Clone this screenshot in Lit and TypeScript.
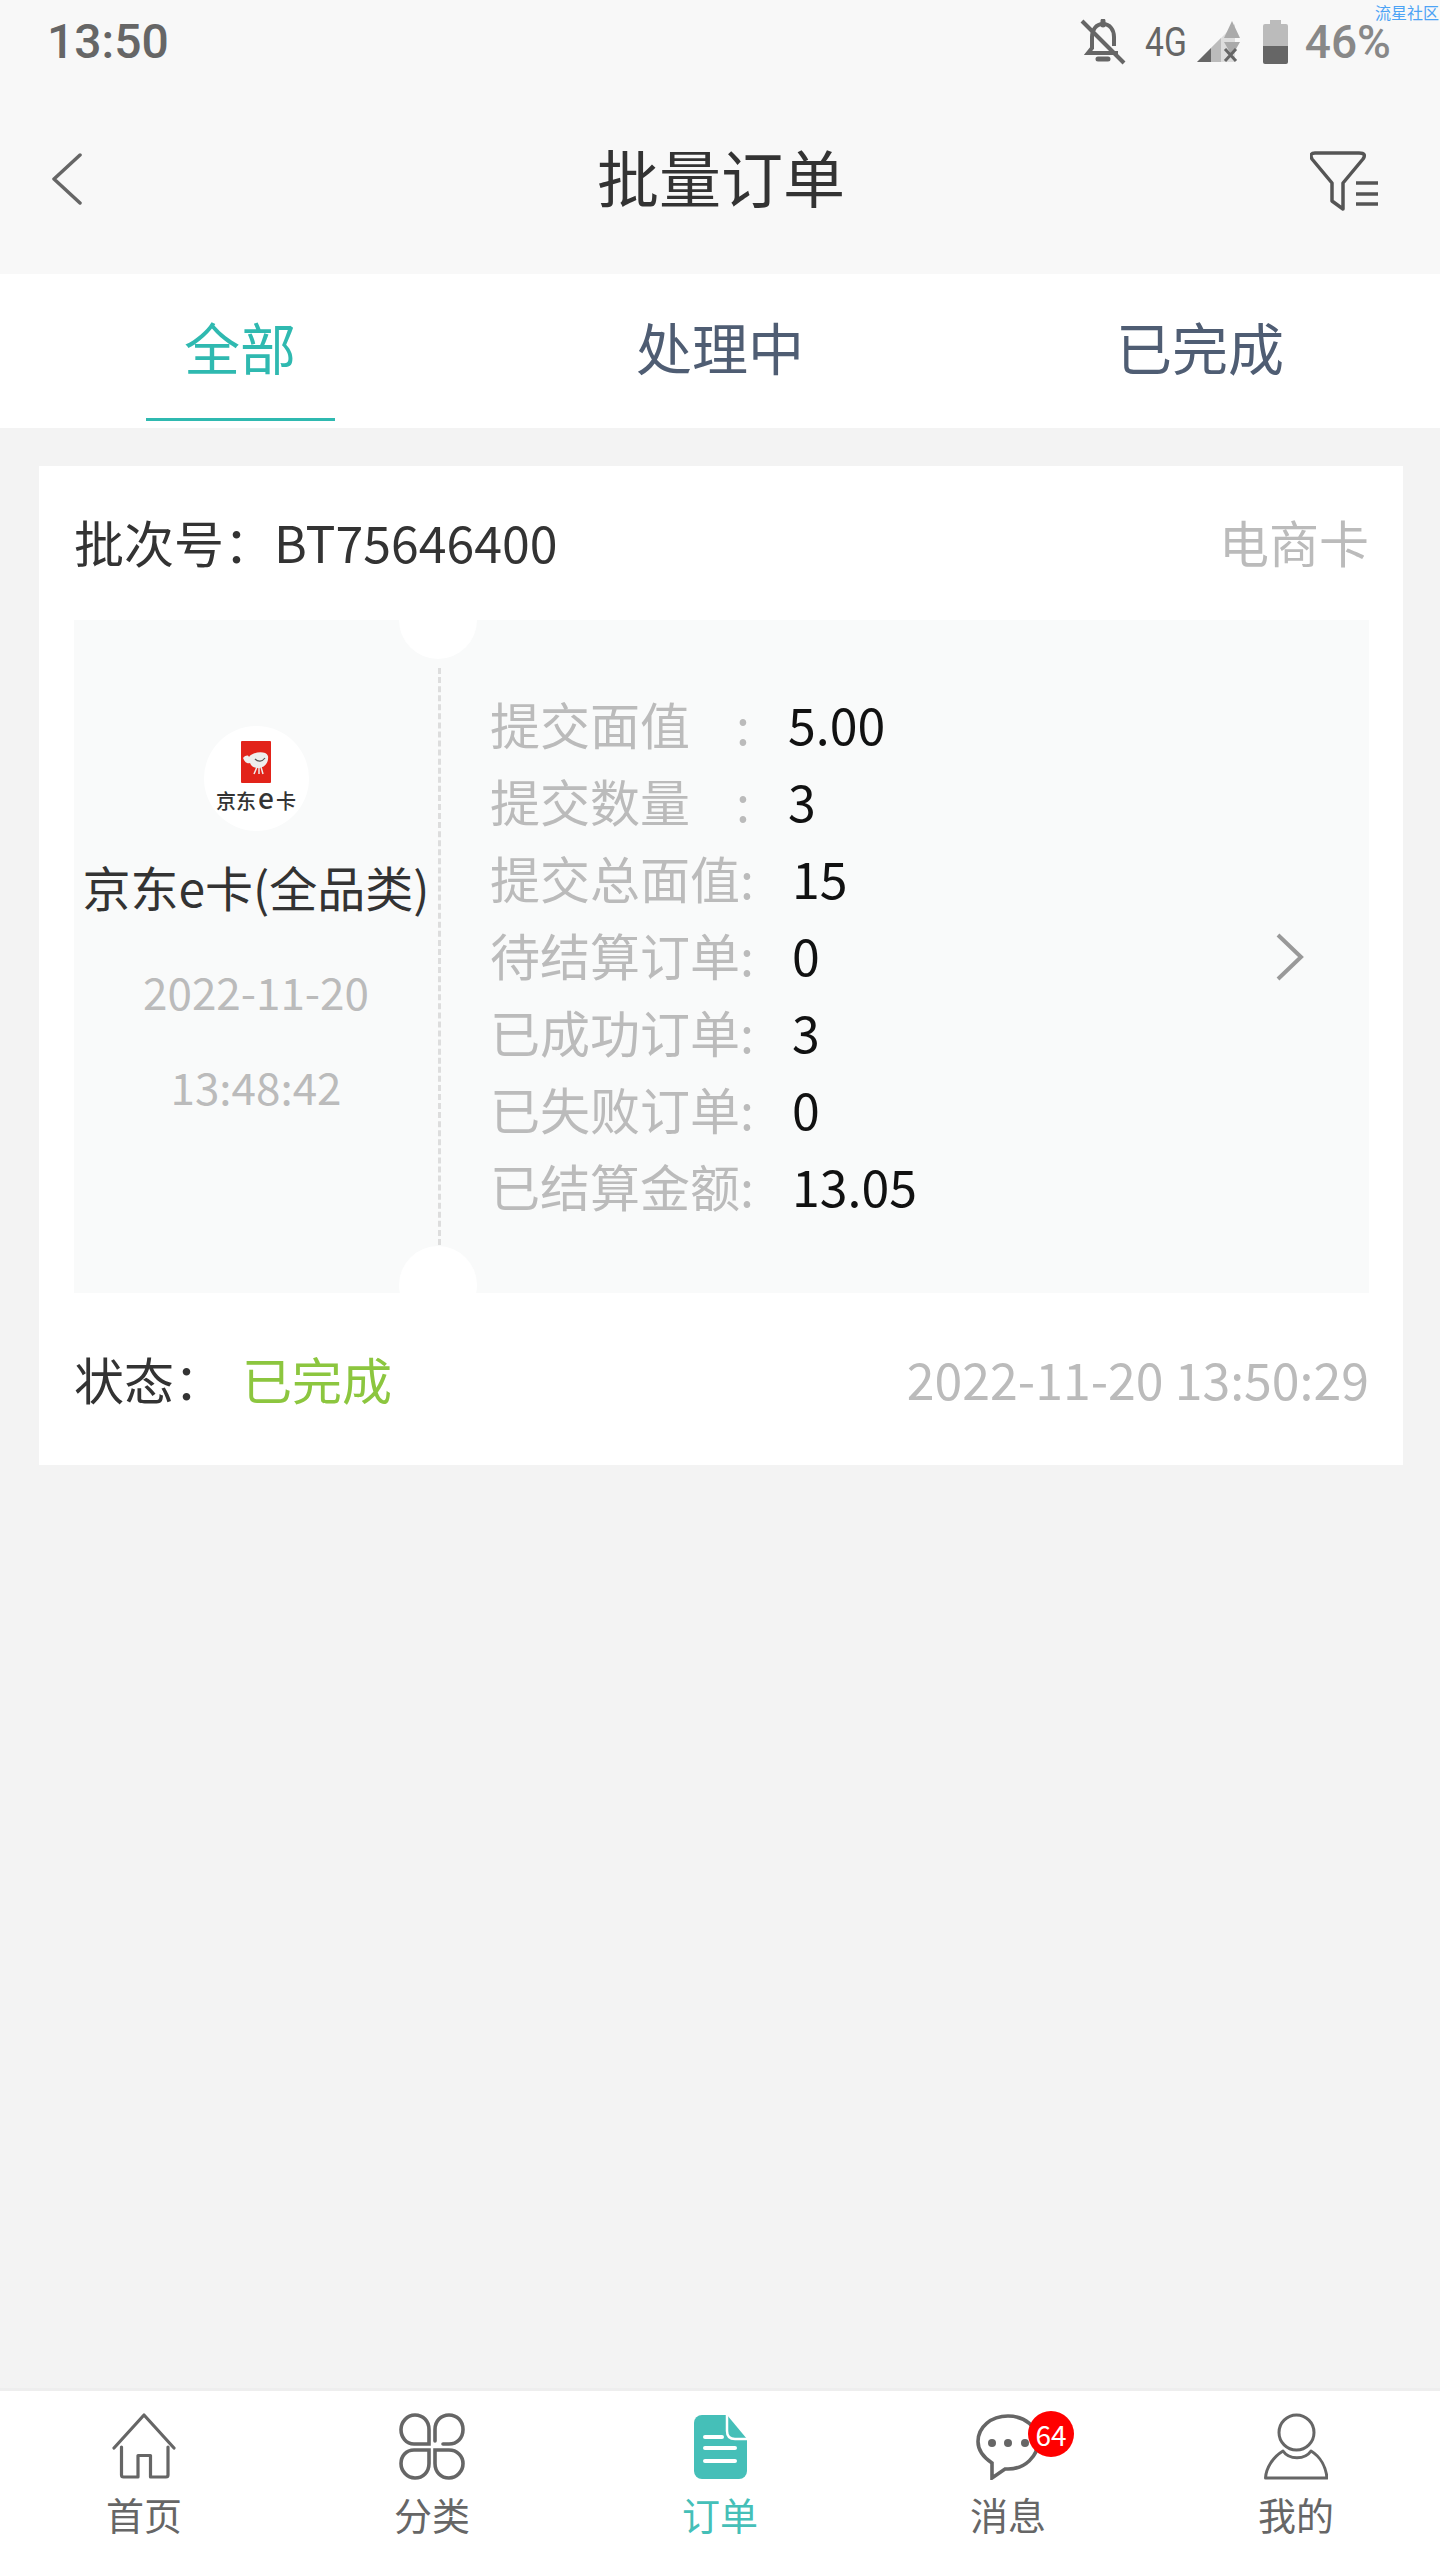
import { LitElement, html, css, svg } from 'lit';
import { customElement } from 'lit/decorators.js';

const rows = [
  { label: '提交面值', value: '5.00', wide: true },
  { label: '提交数量', value: '3', wide: true },
  { label: '提交总面值', value: '15' },
  { label: '待结算订单', value: '0' },
  { label: '已成功订单', value: '3' },
  { label: '已失败订单', value: '0' },
  { label: '已结算金额', value: '13.05' },
];

const homeIcon = svg`<svg class="ti" width="64" height="67" viewBox="0 0 64 67" fill="none" stroke="#666" stroke-width="3.2" stroke-linecap="round" stroke-linejoin="round"><path d="M2 35 32 2 62 35"/><path d="M9.500 34V62a2 2 0 0 0 2 2H26V42.500H38.500V64H54a2 2 0 0 0 2-2V34"/></svg>`;

const catIcon = svg`<svg class="ti" width="66" height="67" viewBox="0 0 66 67" fill="none" stroke="#666" stroke-width="3.600" stroke-linecap="round"><path d="M30 31H15C7 31 2 24 2 16.500S8 2 16 2 30 8 30 16.500Z"/><path d="M36 28V16.500C36 8 42 2 50 2S64 8 64 16.500 58 31 50 31H44"/><path d="M30 37H15C7 37 2 43 2 50.500S8 65 16 65 30 59 30 50.500Z"/><path d="M36 37H50C58 37 64 43 64 50.500S58 65 50 65 36 59 36 50.500Z"/></svg>`;

const docIcon = svg`<svg class="ti" width="53" height="64" viewBox="0 0 53 64"><path fill="#45bfb8" d="M8 0H33L53 24V56a8 8 0 0 1-8 8H8a8 8 0 0 1-8-8V8a8 8 0 0 1 8-8Z"/><path fill="none" stroke="#fff" stroke-width="2.500" d="M33 0V16q0 8 8 8H53"/><g stroke="#fff" stroke-width="4" stroke-linecap="round"><path d="M11 22H28M11 33H41M11 46H41"/></g></svg>`;

const chatIcon = svg`<svg class="ti" width="64" height="67" viewBox="0 0 64 67" fill="none"><path stroke="#666" stroke-width="3.600" d="M16 50C7 44 2 37 2 28.500 2 14 15 3 32 3S62 14 62 28.500 49 56 32 56H29L16 65Z"/><circle cx="16" cy="30" r="4" fill="#666"/><circle cx="32" cy="30" r="4" fill="#666"/><circle cx="49" cy="30" r="4" fill="#666"/></svg>`;

const userIcon = svg`<svg class="ti" width="64" height="67" viewBox="0 0 64 67" fill="none" stroke="#666" stroke-width="3"><ellipse cx="32.500" cy="19.500" rx="17.500" ry="17.500"/><path stroke-linejoin="round" d="M19 38C25 47 41 47 47 38 57 44 62 55 63 65H1.500C2 55 9 44 19 38Z"/></svg>`;

const tabs = [
  { label: '首页', icon: homeIcon },
  { label: '分类', icon: catIcon },
  { label: '订单', icon: docIcon, active: true },
  { label: '消息', icon: chatIcon, badge: '64' },
  { label: '我的', icon: userIcon },
];

@customElement('app-root')
export class AppRoot extends LitElement {
  static styles = css`
    :host {
      width: 1440px;
      height: 2560px;
      background: #f3f3f3;
      font-family: "Noto Sans CJK SC", "Noto Sans", sans-serif;
      display: flex;
      flex-direction: column;
      overflow: hidden;
    }

    .top {
      background: #f8f8f8;
      height: 274px;
      flex: none;
    }

    .status {
      position: relative;
      height: 84px;
      padding: 0 49px 0 47px;
      display: flex;
      align-items: center;
      justify-content: space-between;
      font-family: Roboto, sans-serif;
      font-weight: 500;
      box-sizing: border-box;
    }
    .clock {
      font-size: 48px;
      line-height: 84px;
      color: #666;
    }
    .status-right {
      display: flex;
      align-items: center;
    }
    .net {
      font-size: 40px;
      font-weight: 400;
      color: #666;
      width: 44px;
      margin: 0 8px 0 19px;
      transform: scaleX(0.84);
      transform-origin: left center;
      white-space: nowrap;
    }
    .pct {
      font-size: 46px;
      color: #888;
      margin-left: 17px;
    }
    .batt {
      margin-left: 22px;
    }
    .mark {
      position: absolute;
      left: 1375px;
      top: 0;
      font-family: "Noto Sans CJK SC", sans-serif;
      font-weight: 400;
      font-size: 16px;
      line-height: 24px;
      color: #4da3f5;
      white-space: nowrap;
    }

    .nav {
      height: 190px;
      display: grid;
      grid-template-columns: 1fr auto 1fr;
      align-items: center;
      padding: 0 62px 0 52px;
    }
    .nav h1 {
      margin: 0 0 6px;
      font-size: 62px;
      font-weight: 400;
      color: #333;
      line-height: 80px;
      position: relative;
      left: 6px;
    }
    .filter {
      justify-self: end;
      margin-top: 4px;
    }

    .tabs {
      background: #fff;
      height: 154px;
      flex: none;
      display: grid;
      grid-template-columns: repeat(3, 480px);
    }
    .tab {
      position: relative;
      text-align: center;
      font-size: 56px;
      line-height: 144px;
      color: #4f5d73;
    }
    .tab.on {
      color: #2fb9b0;
    }
    .tab.on::after {
      content: "";
      position: absolute;
      left: 146px;
      width: 189px;
      top: 144px;
      height: 3px;
      background: #2fb9b0;
    }

    .card {
      background: #fff;
      margin: 38px 37px 0 39px;
      height: 999px;
      flex: none;
      display: flex;
      flex-direction: column;
      font-size: 50px;
    }
    .card-head {
      height: 154px;
      flex: none;
      padding: 0 34px 0 35px;
      display: flex;
      justify-content: space-between;
      line-height: 150px;
      color: #333;
    }
    .muted {
      color: #bbb;
    }

    .ticket {
      position: relative;
      height: 673px;
      flex: none;
      margin: 0 34px 0 35px;
      background: #f9fafa;
      display: flex;
      overflow: hidden;
    }
    .notch {
      position: absolute;
      left: 325px;
      width: 78px;
      height: 78px;
      border-radius: 50%;
      background: #fff;
    }
    .notch.a {
      top: -39px;
    }
    .notch.b {
      bottom: -31px;
    }
    .left {
      width: 364px;
      flex: none;
      display: flex;
      flex-direction: column;
      align-items: center;
      padding-top: 106px;
      box-sizing: border-box;
    }
    .logo {
      width: 105px;
      height: 105px;
      border-radius: 50%;
      background: #fff;
      display: flex;
      flex-direction: column;
      align-items: center;
      padding-top: 15px;
      box-sizing: border-box;
    }
    .logo-text {
      font-size: 20px;
      font-weight: 500;
      line-height: 26px;
      margin-top: 4px;
      color: #333;
      white-space: nowrap;
    }
    .logo-text em {
      font-size: 28px;
      line-height: 20px;
      font-style: normal;
      font-weight: 500;
      margin: 0 2px;
    }
    .name {
      font-size: 48px;
      color: #333;
      line-height: 70px;
      margin-top: 20px;
      white-space: nowrap;
    }
    .when {
      font-size: 44px;
      color: #bbb;
      line-height: 95px;
      margin-top: 23px;
      text-align: center;
    }
    .divider {
      width: 0;
      border-left: 3px dashed #ddd;
      height: 577px;
      margin-top: 48px;
      flex: none;
    }
    .rows {
      flex: 1;
      padding: 65px 0 0 49px;
    }
    .row {
      display: flex;
      line-height: 77px;
      white-space: nowrap;
    }
    .row .lbl {
      width: 302px;
      color: #bbb;
      flex: none;
    }
    .row.wide .lbl {
      width: 298px;
      display: flex;
    }
    .row.wide .lbl i {
      font-style: normal;
      margin-left: 46px;
    }
    .row .val {
      color: #111;
    }
    .more {
      align-self: center;
      margin-right: 65px;
      flex: none;
    }

    .card-foot {
      flex: 1;
      padding: 0 34px 0 35px;
      display: flex;
      justify-content: space-between;
      line-height: 170px;
      color: #333;
    }
    .state {
      display: flex;
    }
    .state b {
      font-weight: 400;
      color: #8cc63f;
      margin-left: 18px;
    }

    .tabbar {
      margin-top: auto;
      height: 172px;
      flex: none;
      box-sizing: border-box;
      background: #fff;
      border-top: 3px solid #eee;
      display: grid;
      grid-template-columns: repeat(5, 288px);
    }
    .bar-item {
      display: flex;
      flex-direction: column;
      align-items: center;
      font-size: 38px;
      color: #666;
      padding-top: 22px;
    }
    .bar-item.on {
      color: #45bfb8;
    }
    .bar-icon {
      position: relative;
      height: 67px;
      display: flex;
      align-items: center;
    }
    .bar-item span {
      line-height: 50px;
      margin-top: 9px;
    }
    .badge {
      position: absolute;
      left: 52px;
      top: -2px;
      width: 46px;
      height: 46px;
      border-radius: 50%;
      background: #f00;
      color: #fff;
      font-size: 28px;
      line-height: 46px;
      text-align: center;
    }
  `;

  render() {
    return html`
      <div class="top">
        <div class="status">
          <span class="clock">13:50</span>
          <span class="mark">流星社区</span>
          <div class="status-right">
            <svg width="46" height="46" viewBox="0 0 46 46" fill="none" stroke="#666" stroke-width="4">
              <path d="M23 5c-7 0-11 6-11 13v11l-4 5h30M34 27v-9c0-7-4-13-11-13"/>
              <path d="M18 40h10M23 2v4" stroke-width="5" stroke-linecap="round"/>
              <path d="M2 2l42 42"/>
            </svg>
            <span class="net">4G</span>
            <svg width="44" height="42" viewBox="0 0 44 42">
              <path fill="#ddd" d="M0 41 38 3v38Z"/>
              <path fill="#bbb" d="M14 27 24 17v24H14Z"/>
              <path fill="#666" d="M0 41 14 27v14Z"/>
              <path fill="#aaa" d="M35 0l8 17H27ZM27 21h16l-8 14Z"/>
              <path stroke="#666" stroke-width="3" d="M28 28l11 12M39 28 28 40"/>
            </svg>
            <svg class="batt" width="25" height="44" viewBox="0 0 25 44">
              <path fill="#bbb" d="M7 0h11v4h5a2 2 0 0 1 2 2v20H0V6a2 2 0 0 1 2-2h5Z"/>
              <path fill="#666" d="M0 26h25v16a2 2 0 0 1-2 2H2a2 2 0 0 1-2-2Z"/>
            </svg>
            <span class="pct">46%</span>
          </div>
        </div>
        <div class="nav">
          <svg width="30" height="52" viewBox="0 0 30 52" fill="none" stroke="#666" stroke-width="3.500" stroke-linecap="round" stroke-linejoin="round">
            <path d="M28 2 2 26l26 24" />
          </svg>
          <h1>批量订单</h1>
          <svg class="filter" width="68" height="60" viewBox="0 0 68 60" fill="none" stroke="#555" stroke-width="3.500" stroke-linejoin="round">
            <path d="M5 2H49Q57 2 53 8L33 32V58L22 50V32L2 8Q-1 2 5 2Z"/>
            <path d="M46 32H68M46 43H68M46 53H68" stroke-width="3.500"/>
          </svg>
        </div>
      </div>

      <div class="tabs">
        <div class="tab on">全部</div>
        <div class="tab">处理中</div>
        <div class="tab">已完成</div>
      </div>

      <div class="card">
        <div class="card-head">
          <span>批次号：BT75646400</span>
          <span class="muted">电商卡</span>
        </div>
        <div class="ticket">
          <div class="notch a"></div>
          <div class="notch b"></div>
          <div class="left">
            <div class="logo">
              <svg width="30" height="42" viewBox="0 0 30 42">
                <rect width="30" height="42" rx="1" fill="#e2231a"/>
                <path fill="#eee" d="M2 17c3-3 5-3 6-1 3-5 17-7 19-1 1 7-4 12-10 12-4 0-7-2-8-5-2 1-5 0-7-5Z"/>
                <path fill="none" stroke="#555" stroke-width="1.200" d="M14 18c3 3 7 3 10-1"/>
                <path fill="none" stroke="#eee" stroke-width="1.500" d="M16 26l-3 7M18 26v7M20 26l2 7"/>
              </svg>
              <div class="logo-text">京东<em>e</em>卡</div>
            </div>
            <div class="name">京东e卡(全品类)</div>
            <div class="when muted">2022-11-20<br />13:48:42</div>
          </div>
          <div class="divider"></div>
          <div class="rows">
            ${rows.map(
              (r) => html`
                <div class="row ${r.wide ? 'wide' : ''}">
                  <div class="lbl">${r.wide ? html`${r.label}<i>:</i>` : `${r.label}:`}</div>
                  <div class="val">${r.value}</div>
                </div>
              `
            )}
          </div>
          <svg class="more" width="28" height="48" viewBox="0 0 28 48" fill="none" stroke="#999" stroke-width="4">
            <path d="M2 2l23 22L2 46" />
          </svg>
        </div>
        <div class="card-foot">
          <div class="state">状态：<b>已完成</b></div>
          <span class="muted">2022-11-20 13:50:29</span>
        </div>
      </div>

      <div class="tabbar">
        ${tabs.map(
          (t) => html`
            <div class="bar-item ${t.active ? 'on' : ''}">
              <div class="bar-icon">
                ${t.icon}
                ${t.badge ? html`<div class="badge">${t.badge}</div>` : ''}
              </div>
              <span>${t.label}</span>
            </div>
          `
        )}
      </div>
    `;
  }
}
